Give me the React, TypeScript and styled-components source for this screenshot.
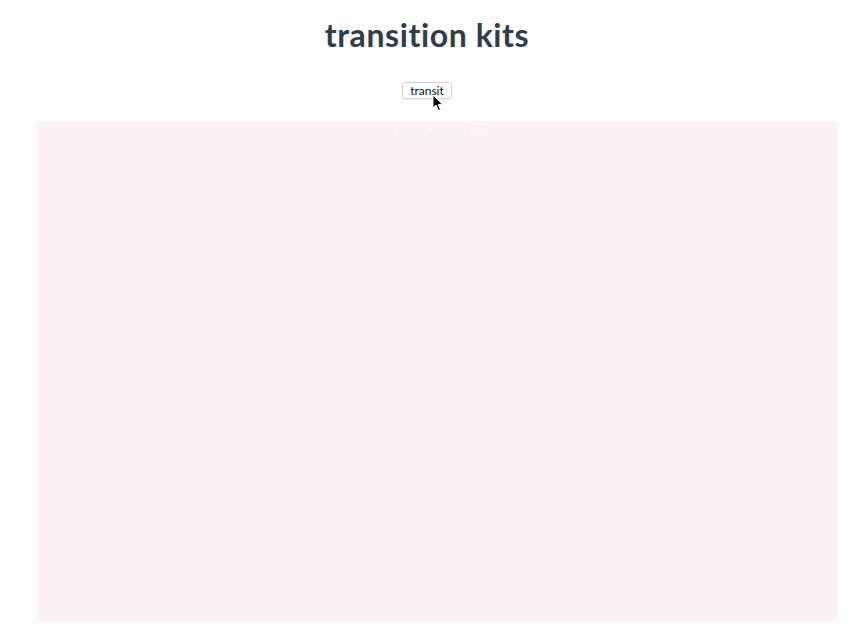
import styled, { createGlobalStyle } from 'styled-components'

const GlobalStyle = createGlobalStyle`
  html, body {
    margin: 0;
    background: #fdfdfd;
  }
  body {
    font-family: Lato, 'Open Sans', sans-serif;
    color: #2c3e50;
  }
`

export default function App() {
  return (
    <Page>
      <GlobalStyle />
      <Title>transition kits</Title>
      <Controls>
        <TransitButton>transit</TransitButton>
        <Cursor viewBox="0 0 12 18" width="12" height="18">
          <path d="M1 1 L1 14 L4 11 L6.5 16.5 L8.5 15.6 L6.2 10.4 L10.5 10.4 Z" fill="#000" stroke="#fff" strokeWidth="1" strokeLinejoin="round" />
        </Cursor>
      </Controls>
      <Stage>
        <Label>component 2</Label>
      </Stage>
    </Page>
  )
}

const Page = styled.div`
  display: flex;
  flex-direction: column;
  align-items: center;
  width: 854px;
  height: 624px;
  padding-top: 15px;
  box-sizing: border-box;
`
const Title = styled.h1`
  margin: 0;
  font-size: 32px;
  font-weight: 700;
  line-height: 40px;
  letter-spacing: 0.6px;
`
const Controls = styled.div`
  position: relative;
  margin-top: 27px;
  height: 17px;
`
const TransitButton = styled.button`
  display: block;
  height: 17px;
  padding: 0 7px;
  font-family: Lato, 'Open Sans', sans-serif;
  font-size: 12px;
  line-height: 15px;
  color: #111;
  background: #fff;
  border: 1px solid #d4d4d4;
  border-radius: 3px;
  box-shadow: 0 1px 1px rgba(0, 0, 0, 0.06);
`
const Cursor = styled.svg`
  position: absolute;
  left: 30px;
  top: 12px;
`
const Stage = styled.div`
  align-self: flex-start;
  margin: 22px 0 0 37px;
  width: 800px;
  height: 500px;
  background: #fcf1f5;
  display: flex;
  justify-content: center;
`
const Label = styled.div`
  font-size: 16px;
  line-height: 22px;
  color: #f3f2f2;
`
